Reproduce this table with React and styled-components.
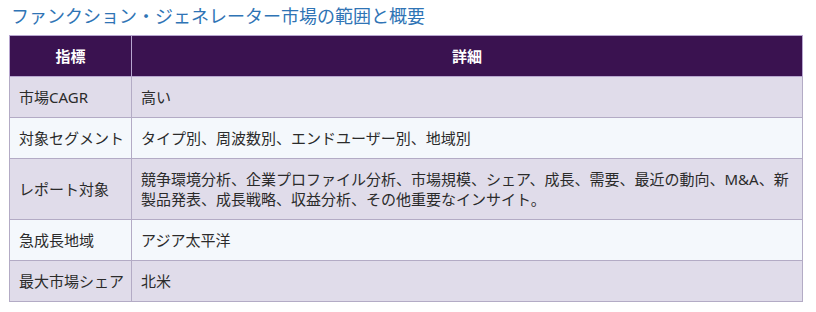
import React from "react";
import styled, { createGlobalStyle } from "styled-components";

const Global = createGlobalStyle`
  html, body { margin: 0; padding: 0; background: #ffffff; }
  body { font-family: "Noto Sans", "Noto Sans CJK JP", sans-serif; }
`;

const Page = styled.div`
  padding: 2px 13px 0 9px;
`;

const Title = styled.h2`
  margin: 0 0 7px 2px;
  font-family: "Noto Sans CJK JP", sans-serif;
  font-weight: 400;
  font-size: 18px;
  line-height: 26px;
  color: #2f74b5;
`;

const Table = styled.table`
  width: 794px;
  border-collapse: collapse;
  table-layout: fixed;
  font-family: "Noto Sans", "Noto Sans CJK JP", sans-serif;
  font-size: 15px;
  line-height: 20px;
  color: #2b2b2b;
`;

const HeadCell = styled.th`
  background: #3a1250;
  color: #ffffff;
  font-weight: 700;
  text-align: center;
  padding: 10px 4px;
  border: 1px solid #b7a6cf;
`;

const Row = styled.tr`
  background: ${(p) => (p.$alt ? "#f4f8fc" : "#e0dcea")};
`;

const Cell = styled.td`
  padding: 10px ${(p) => (p.$key ? "2px" : "8px")} 10px 9px;
  border: 1px solid #b3abc5;
  vertical-align: middle;
  text-align: left;
  white-space: ${(p) => (p.$key ? "nowrap" : "normal")};
`;

const rows = [
  ["市場CAGR", "高い"],
  ["対象セグメント", "タイプ別、周波数別、エンドユーザー別、地域別"],
  [
    "レポート対象",
    "競争環境分析、企業プロファイル分析、市場規模、シェア、成長、需要、最近の動向、M&A、新製品発表、成長戦略、収益分析、その他重要なインサイト。",
  ],
  ["急成長地域", "アジア太平洋"],
  ["最大市場シェア", "北米"],
];

export default function App() {
  return (
    <>
      <Global />
      <Page>
        <Title>ファンクション・ジェネレーター市場の範囲と概要</Title>
        <Table>
          <colgroup>
            <col style={{ width: "122px" }} />
            <col />
          </colgroup>
          <thead>
            <tr>
              <HeadCell>指標</HeadCell>
              <HeadCell>詳細</HeadCell>
            </tr>
          </thead>
          <tbody>
            {rows.map(([k, v], i) => (
              <Row key={k} $alt={i % 2 === 1}>
                <Cell $key>{k}</Cell>
                <Cell>{v}</Cell>
              </Row>
            ))}
          </tbody>
        </Table>
      </Page>
    </>
  );
}
